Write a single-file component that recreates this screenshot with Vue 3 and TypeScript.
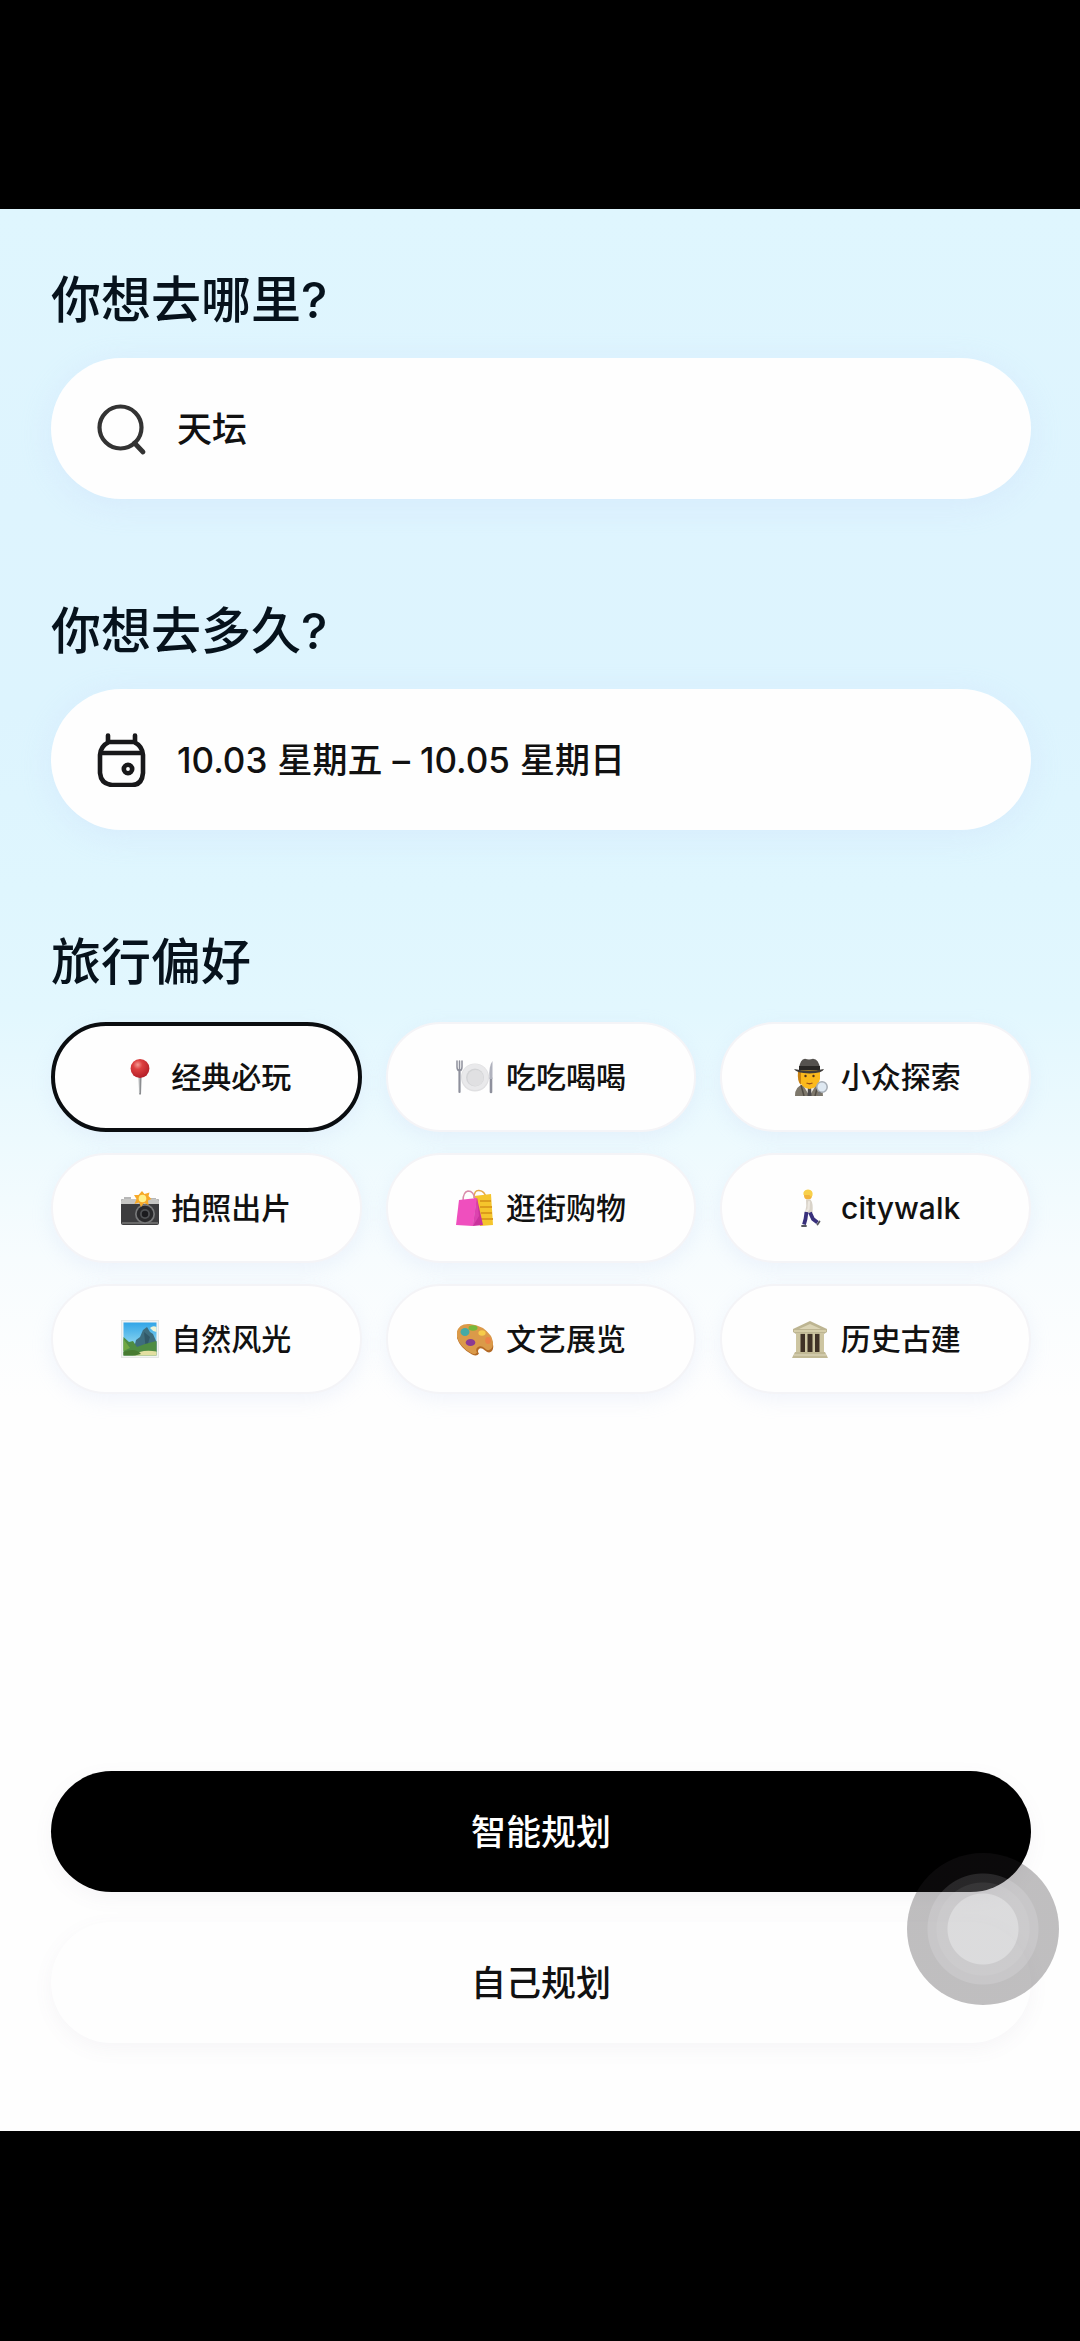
<script setup lang="ts">
import { ref } from 'vue'

interface Preference {
  id: string
  label: string
}

interface TripDay {
  date: string
  weekday: string
}

const destination = ref('天坛')
const start = ref<TripDay>({ date: '10.03', weekday: '星期五' })
const end = ref<TripDay>({ date: '10.05', weekday: '星期日' })
const selected = ref<string[]>(['classic'])

const preferences: Preference[] = [
  { id: 'classic', label: '经典必玩' },
  { id: 'food', label: '吃吃喝喝' },
  { id: 'niche', label: '小众探索' },
  { id: 'photo', label: '拍照出片' },
  { id: 'shopping', label: '逛街购物' },
  { id: 'walk', label: 'citywalk' },
  { id: 'nature', label: '自然风光' },
  { id: 'art', label: '文艺展览' },
  { id: 'history', label: '历史古建' },
]

function toggle(id: string) {
  selected.value = selected.value.includes(id)
    ? selected.value.filter((item) => item !== id)
    : [...selected.value, id]
}
</script>

<template>
  <div class="frame">
    <main class="screen">
      <section class="block">
        <h2 class="title"><label for="destination">你想去哪里?</label></h2>
        <div class="field">
          <svg class="field-icon" viewBox="0 0 54 54" fill="none" stroke="#333" stroke-width="4.2" stroke-linecap="round" aria-hidden="true">
            <circle cx="25.500" cy="25.500" r="21" />
            <path d="M39.500 41 48 50" stroke-width="4.800" />
          </svg>
          <input id="destination" v-model="destination" class="field-value" type="text" />
        </div>
      </section>

      <section class="block">
        <h2 class="title"><label for="dates">你想去多久?</label></h2>
        <div class="field">
          <svg class="field-icon" viewBox="0 0 54 54" fill="none" stroke="#18181a" stroke-width="4.600" stroke-linecap="round" stroke-linejoin="round" aria-hidden="true">
            <path d="M14 9H39Q47.500 13 48 22V40Q47 52 37 52H17Q6 51 5 40V22Q5.500 13 14 9Z" />
            <path d="M5 20H48" stroke-linecap="butt" />
            <path d="M13 2.500V9M40 2.500V9" />
            <circle cx="33" cy="36" r="4.200" />
          </svg>
          <button id="dates" type="button" class="field-value range">
            <span>{{ start.date }}</span>
            <span>{{ start.weekday }}</span>
            <span>–</span>
            <span>{{ end.date }}</span>
            <span>{{ end.weekday }}</span>
          </button>
        </div>
      </section>

      <section class="block">
        <h2 class="title">旅行偏好</h2>
        <div class="chips">
          <button
            v-for="item in preferences"
            :key="item.id"
            type="button"
            class="chip"
            :class="{ 'is-selected': selected.includes(item.id) }"
            :aria-pressed="selected.includes(item.id)"
            @click="toggle(item.id)"
          >
            <!-- round pin -->
            <svg v-if="item.id === 'classic'" class="emoji" viewBox="0 0 38 38" aria-hidden="true">
              <defs>
                <radialGradient id="pin" cx=".38" cy=".3" r=".7">
                  <stop offset="0" stop-color="#f39a93" />
                  <stop offset=".35" stop-color="#dd4040" />
                  <stop offset="1" stop-color="#b51f28" />
                </radialGradient>
              </defs>
              <path d="M17.600 18H20.600L20 36.500H18.200Z" fill="#8b8d90" />
              <path d="M18.400 19V35" stroke="#c4c6c8" stroke-width=".8" />
              <circle cx="19" cy="10.500" r="9.400" fill="url(#pin)" />
            </svg>

            <!-- plate with fork and knife -->
            <svg v-else-if="item.id === 'food'" class="emoji" viewBox="0 0 38 38" aria-hidden="true">
              <circle cx="19" cy="19.500" r="14" fill="#e0e0e2" />
              <circle cx="19" cy="19" r="13" fill="#e9e9eb" />
              <circle cx="19" cy="19.500" r="9" fill="#d3d4d6" />
              <circle cx="19.500" cy="20" r="8" fill="#e0e0e2" />
              <g fill="none" stroke="#8e909c" stroke-linecap="round">
                <path d="M1 3V9Q1 12.500 3.500 13Q6 12.500 6 9V3M3.500 3V13" stroke-width="1.500" />
                <path d="M3.500 14V34" stroke-width="2.200" />
                <path d="M35 20V34" stroke-width="2.600" />
              </g>
              <path d="M36.500 3V21H33.500Q32.500 8 36.500 3Z" fill="#b0b2bd" />
            </svg>

            <!-- detective -->
            <svg v-else-if="item.id === 'niche'" class="emoji" viewBox="0 0 38 38" aria-hidden="true">
              <path d="M4 38Q4 28 12 27H26Q32 29 32 38Z" fill="#7d776b" />
              <path d="M12 27 18.500 38 25 27Z" fill="#eeeae1" />
              <path d="M17 29H20L20.500 38H16.500Z" fill="#4c4a4c" />
              <path d="M10 27 13 38M27 27 24 38" stroke="#4f4a42" stroke-width="1.500" />
              <path d="M8 12H29V21Q27 30 18.500 31Q10 30 8 21Z" fill="#fbb91c" />
              <path d="M7 13H10V27Q6 24 7 13Z" fill="#c98212" />
              <circle cx="14.500" cy="18" r="1.200" fill="#51331a" />
              <circle cx="22.500" cy="18" r="1.200" fill="#51331a" />
              <path d="M15.500 25Q18.500 26.500 21.500 25" fill="none" stroke="#9c5018" stroke-width="1.300" />
              <path d="M8 11Q9 1 14 .8Q18 2.200 22 .8Q28 1 29 11Z" fill="#55524f" />
              <path d="M8 8H29V12H8Z" fill="#292725" />
              <path d="M3 11Q18 14 33 11Q32 15 18.500 15.500Q5 15 3 11Z" fill="#3f3c3a" />
              <circle cx="31" cy="29" r="5.200" fill="#dfe9f2" stroke="#a6adb5" stroke-width="1.500" />
              <path d="M29 34 27.500 37.500" stroke="#777" stroke-width="2" />
            </svg>

            <!-- camera with flash -->
            <svg v-else-if="item.id === 'photo'" class="emoji" viewBox="0 0 38 38" aria-hidden="true">
              <path d="M3 8H10V12H3ZM29 9H35V12H29Z" fill="#b7b7b7" />
              <rect y="10" width="38" height="26" rx="2" fill="#3c3c3e" />
              <path d="M0 15V12Q0 10 2 10H36Q38 10 38 12V15Z" fill="#c5c5c3" />
              <path d="M1 34H37" stroke="#777" stroke-width="1.500" />
              <circle cx="24" cy="25" r="10" fill="#777879" />
              <circle cx="24" cy="25" r="8.300" fill="#29292b" />
              <circle cx="24" cy="25" r="5" fill="#4e5053" />
              <circle cx="24" cy="25" r="3.200" fill="#1b1b1e" />
              <path d="M21 2 23.500 5 28.500 3.500 27.500 7 30.500 10 27 11.500 27.500 16 23 14 20 18 18 13.500 13.500 15 15.500 10 13 6 17.500 6Z" fill="#f7a928" />
              <circle cx="21.500" cy="9.500" r="3.800" fill="#fff08a" />
            </svg>

            <!-- shopping bags -->
            <svg v-else-if="item.id === 'shopping'" class="emoji" viewBox="0 0 38 38" aria-hidden="true">
              <path d="M18 9Q18 1 23 1.500Q29 2 30 9" fill="none" stroke="#e5a94b" stroke-width="1.500" />
              <path d="M18 7 35 5 37 36 24 37Z" fill="#f5c52c" />
              <path d="M24 12H35M24 18H36M25 24H36M25 30H37" stroke="#dc9c1b" stroke-width="1.800" />
              <path d="M7 12Q7 3 12 2Q18 2 19 11" fill="none" stroke="#d88baa" stroke-width="1.500" />
              <path d="M3 11 21 9 17 37 0 36Z" fill="#ef4fbe" />
              <path d="M21 9 27 36 17 37Z" fill="#c9329c" />
              <path d="M21 9 23 27 17 37Z" fill="#dc42af" />
            </svg>

            <!-- walking person -->
            <svg v-else-if="item.id === 'walk'" class="emoji" viewBox="0 0 38 38" aria-hidden="true">
              <circle cx="17" cy="6.500" r="4" fill="#f2b33b" />
              <path d="M12.500 6Q11.500 1 17 .5Q22.500 1 21.500 6.500Q20 9 18.500 6Z" fill="#f8d04a" />
              <path d="M15 10.500H19.500Q22.500 14 21.500 24H14Q16 17 15 10.500Z" fill="#d9d3c9" />
              <path d="M18 13 17.500 20 14.500 24" fill="none" stroke="#ece7df" stroke-width="2.200" stroke-linecap="round" />
              <path d="M15.500 23 14.500 30 13 35.500M19 23.500 22 30 26.500 33.500" fill="none" stroke="#38307b" stroke-width="3.800" />
              <path d="M11 37H15M26.500 35.500 28.500 32.500" stroke="#55565e" stroke-width="1.800" stroke-linecap="round" />
            </svg>

            <!-- framed landscape -->
            <svg v-else-if="item.id === 'nature'" class="emoji" viewBox="0 0 38 38" aria-hidden="true">
              <defs>
                <linearGradient id="sky" x1="0" y1="0" x2="0" y2="1">
                  <stop offset="0" stop-color="#31a5e8" />
                  <stop offset="1" stop-color="#b6edf3" />
                </linearGradient>
              </defs>
              <rect x=".5" y=".5" width="37" height="37" fill="#f3f4f3" stroke="#e4e6e5" />
              <rect x="2.500" y="2.500" width="33" height="33" fill="url(#sky)" />
              <path d="M29 8Q32 5 35.500 7V12Q31 11 29 8Z" fill="#eef4d7" />
              <path d="M12 32 15 20 19 17 22 10 26 7 29 12 32 14 35.500 22V32Z" fill="#3e6d7d" />
              <path d="M23 12 25 30 29 17Z" fill="#315867" />
              <path d="M2.500 17 8 22 12 21 16 27 24 24 35.500 21V35.500H2.500Z" fill="#4e8c42" />
              <path d="M2.500 19 9 28 2.500 31Z" fill="#70a741" />
              <path d="M12 35.500Q20 29 35.500 31.500V35.500Z" fill="#e2dfa1" />
              <path d="M2.500 32Q14 27 20 34L14 35.500H2.500Z" fill="#477b31" />
            </svg>

            <!-- artist palette -->
            <svg v-else-if="item.id === 'art'" class="emoji" viewBox="0 0 38 38" aria-hidden="true">
              <path d="M1 13Q3 4 14 5Q27 6 35 17Q39 27 36 31Q33 34 29 30.500Q25 27 23 29Q21 31 23 33.500Q21 37 16 34.500Q4 28 1 18Z" fill="#b36a26" />
              <path d="M1 12Q3 3 14 4Q27 5 35 16Q39 25 35 29Q32 31.500 29 28.500Q25 25 22 27Q19 29 21 32.500Q19 35.500 15 33Q4 27 1 17Z" fill="#db9a49" />
              <ellipse cx="9" cy="12" rx="4.500" ry="4" fill="#45aaa5" />
              <ellipse cx="17" cy="8" rx="4.500" ry="2.800" fill="#76b83b" />
              <ellipse cx="26" cy="13" rx="3.600" ry="2.800" fill="#f6cc4a" />
              <ellipse cx="32" cy="20.500" rx="2.800" ry="3.400" fill="#ec8247" />
              <ellipse cx="14.500" cy="22.500" rx="4.800" ry="3.600" fill="#8b3b94" />
            </svg>

            <!-- classical building -->
            <svg v-else class="emoji" viewBox="0 0 38 38" aria-hidden="true">
              <path d="M7 12H31V34H7Z" fill="#3f3126" />
              <path d="M2 9 19 1 36 9V12L33 14H5L2 12Z" fill="#bdb592" />
              <path d="M8 9 19 4 30 9Z" fill="#dbd4b5" />
              <path d="M3 10H35V12H3Z" fill="#d5cda9" />
              <path d="M5 13H9.500V33H5ZM14 13H16.500V33H14ZM21.500 13H24V33H21.500ZM28.500 13H33V33H28.500Z" fill="#cdc5a1" />
              <path d="M4 32H34L37 38H1Z" fill="#c1b995" />
              <path d="M3 35H35" stroke="#e1dbc1" />
            </svg>
            <span>{{ item.label }}</span>
          </button>
        </div>
      </section>

      <div class="actions">
        <button type="button" class="action primary">智能规划</button>
        <button type="button" class="action secondary">自己规划</button>
        <button type="button" class="assist" aria-label="辅助触控"></button>
      </div>
    </main>
  </div>
</template>

<style>
body {
  margin: 0;
  background: #000;
}
</style>

<style scoped>
.frame {
  display: flex;
  flex-direction: column;
  box-sizing: border-box;
  min-height: 100vh;
  padding: 209px 0 210px;
  background: #000;
  font-family: Inter, "Noto Sans CJK SC", sans-serif;
  font-weight: 500;
  color: #0b0c0f;
}

.screen {
  flex: 1;
  display: flex;
  flex-direction: column;
  gap: 102px;
  padding: 61px 49px 88px 51px;
  background: linear-gradient(
    180deg,
    #dff6fe 0,
    #def4fe 300px,
    #ddf4fe 500px,
    #dff6fe 680px,
    #e2f7fe 800px,
    #edfafe 930px,
    #f7fcfe 1050px,
    #fefefe 1190px
  );
}

.title {
  margin: 0 0 28px;
  font-size: 50px;
  line-height: 60px;
  font-weight: 500;
  color: #06121c;
}

.field {
  display: flex;
  align-items: center;
  gap: 28px;
  height: 141px;
  padding: 0 44px;
  border-radius: 71px;
  background: #fefefe;
  box-shadow: 0 6px 30px rgba(200, 215, 250, 0.3);
}

.field-icon {
  flex: none;
  width: 54px;
  height: 54px;
}

.field-value {
  flex: 1;
  min-width: 0;
  padding: 0;
  border: 0;
  outline: 0;
  background: transparent;
  font: inherit;
  font-size: 35px;
  line-height: 50px;
  color: #111;
}

.range {
  display: flex;
  gap: 10px;
}

.chips {
  display: grid;
  grid-template-columns: repeat(3, 1fr);
  gap: 21px 24px;
  padding-top: 2px;
}

.chip {
  display: flex;
  align-items: center;
  justify-content: center;
  gap: 12px;
  height: 110px;
  padding: 0;
  border: 2px solid #f4f4f7;
  border-radius: 55px;
  background: #fefefe;
  box-shadow: 0 6px 20px rgba(190, 205, 240, 0.2);
  font: inherit;
  font-size: 30px;
  line-height: 44px;
  color: #111;
}

.chip.is-selected {
  border: 4px solid #0a0d10;
}

.emoji {
  flex: none;
  width: 38px;
  height: 38px;
}

.actions {
  position: relative;
  display: flex;
  flex-direction: column;
  gap: 30px;
  margin-top: auto;
}

.action {
  height: 121px;
  padding: 0;
  border: 0;
  border-radius: 61px;
  font: inherit;
  font-size: 35px;
  line-height: 50px;
  box-shadow: 0 6px 20px rgba(120, 110, 140, 0.06);
}

.primary {
  background: #000;
  color: #fff;
}

.secondary {
  background: #fefefe;
  color: #111;
}

.assist {
  position: absolute;
  top: 82px;
  right: -28px;
  width: 152px;
  height: 152px;
  padding: 0;
  border: 0;
  border-radius: 50%;
  background: radial-gradient(
    circle,
    rgba(174, 174, 177, 0.43) 35px,
    rgba(132, 130, 134, 0.41) 36px 46px,
    rgba(108, 105, 110, 0.37) 47px 55px,
    rgba(38, 34, 38, 0.29) 56px
  );
}
</style>
